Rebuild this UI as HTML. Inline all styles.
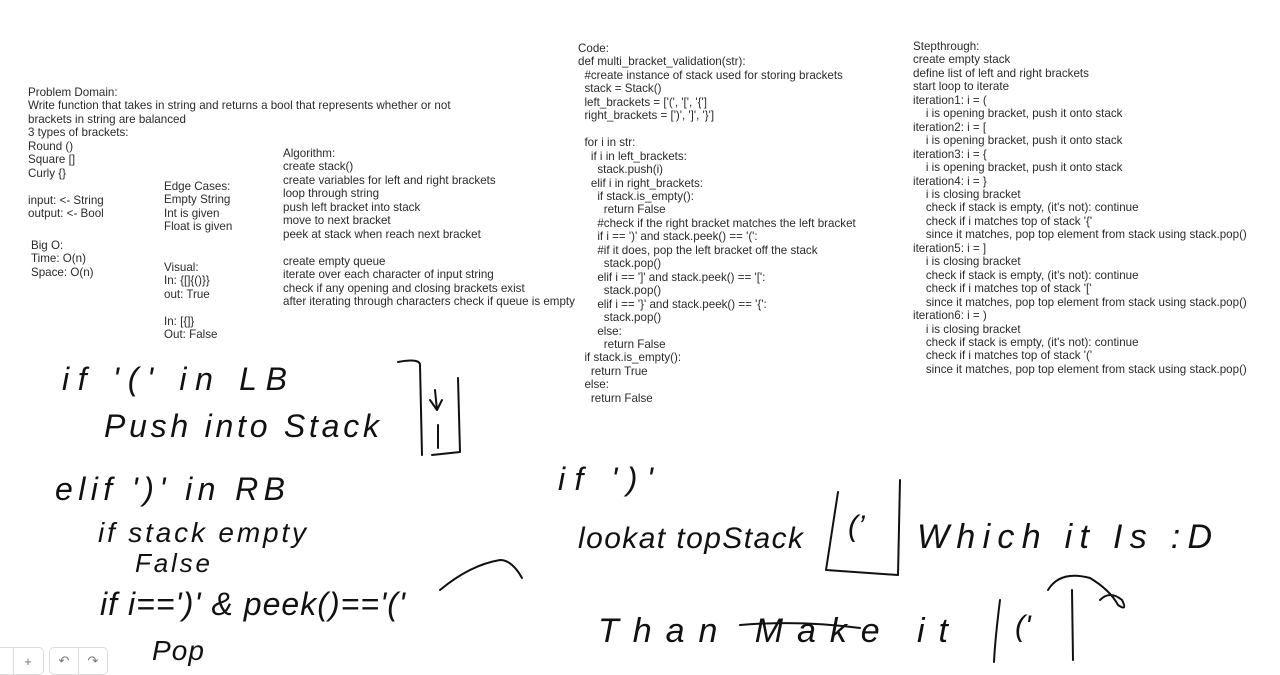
<!DOCTYPE html>
<html><head><style>
body{margin:0;width:1280px;height:673px;background:#fff;overflow:hidden;position:relative;font-family:"Liberation Sans",Arial,sans-serif;font-size:11.6px;color:#2a2a2a}
.b{position:absolute;line-height:13.46px;white-space:pre}
.tb{position:absolute;top:647px;height:26px;border:1px solid #ddd;border-radius:5px;background:#fff;display:flex;color:#777;font-size:13px}
.tb div{width:28px;display:flex;align-items:center;justify-content:center}
.tb div+div{border-left:1px solid #ddd}
</style></head><body>
<div class="b" style="left:28px;top:86px">Problem Domain:
Write function that takes in string and returns a bool that represents whether or not
brackets in string are balanced
3 types of brackets:
Round ()
Square []
Curly {}

input: &lt;- String
output: &lt;- Bool</div>
<div class="b" style="left:31px;top:239px">Big O:
Time: O(n)
Space: O(n)</div>
<div class="b" style="left:164px;top:180px">Edge Cases:
Empty String
Int is given
Float is given


Visual:
In: {[]{()}}
out: True

In: [{]}
Out: False</div>
<div class="b" style="left:283px;top:147px">Algorithm:
create stack()
create variables for left and right brackets
loop through string
push left bracket into stack
move to next bracket
peek at stack when reach next bracket

create empty queue
iterate over each character of input string
check if any opening and closing brackets exist
after iterating through characters check if queue is empty</div>
<div class="b" style="left:578px;top:42px">Code:
def multi_bracket_validation(str):
  #create instance of stack used for storing brackets
  stack = Stack()
  left_brackets = ['(', '[', '{']
  right_brackets = [')', ']', '}']

  for i in str:
    if i in left_brackets:
      stack.push(i)
    elif i in right_brackets:
      if stack.is_empty():
        return False
      #check if the right bracket matches the left bracket
      if i == ')' and stack.peek() == '(':
      #if it does, pop the left bracket off the stack
        stack.pop()
      elif i == ']' and stack.peek() == '[':
        stack.pop()
      elif i == '}' and stack.peek() == '{':
        stack.pop()
      else:
        return False
  if stack.is_empty():
    return True
  else:
    return False</div>
<div class="b" style="left:913px;top:40px">Stepthrough:
create empty stack
define list of left and right brackets
start loop to iterate
iteration1: i = (
    i is opening bracket, push it onto stack
iteration2: i = [
    i is opening bracket, push it onto stack
iteration3: i = {
    i is opening bracket, push it onto stack
iteration4: i = }
    i is closing bracket
    check if stack is empty, (it's not): continue
    check if i matches top of stack '{'
    since it matches, pop top element from stack using stack.pop()
iteration5: i = ]
    i is closing bracket
    check if stack is empty, (it's not): continue
    check if i matches top of stack '['
    since it matches, pop top element from stack using stack.pop()
iteration6: i = )
    i is closing bracket
    check if stack is empty, (it's not): continue
    check if i matches top of stack '('
    since it matches, pop top element from stack using stack.pop()</div>
<svg style="position:absolute;left:0;top:0" width="1280" height="673" fill="none" stroke="#111" stroke-width="2" stroke-linecap="round" stroke-linejoin="round">
<g font-family="Liberation Sans,sans-serif" font-style="italic" font-size="32" fill="#111" stroke="none" font-weight="300">
<text x="62" y="390" textLength="225">if '(' in LB</text>
<text x="104" y="437" textLength="275">Push into Stack</text>
<text x="55" y="500" textLength="230">elif ')' in RB</text>
<text x="98" y="542" textLength="208" font-size="28">if stack empty</text>
<text x="135" y="572" font-size="26" textLength="75">False</text>
<text x="100" y="615" textLength="305">if i==')' &amp; peek()=='('</text>
<text x="152" y="660" font-size="28" textLength="52">Pop</text>
<text x="558" y="490" textLength="95">if ')'</text>
<text x="578" y="548" font-size="30" textLength="225">lookat topStack</text>
<text x="917" y="548" font-size="34" textLength="295">Which it Is :D</text>
<text x="598" y="642" font-size="34" textLength="350">Than Make it</text>
<text x="848" y="536" font-size="30">(’</text>
<text x="1015" y="636" font-size="30">('</text>
</g>
<path d="M398 362 Q420 358 420 365 L422 455 M458 378 L460 452 L432 455 M435 390 L437 410 M430 400 L437 410 L442 400 M438 425 L438 448"/>
<path d="M838 492 L826 570 L898 575 L900 480"/>
<path d="M1000 600 Q995 640 994 662 M1072 590 L1073 660 M1048 590 Q1060 570 1090 578 Q1110 590 1118 605 Q1128 612 1122 600 Q1110 590 1100 600"/>
<path d="M440 590 Q470 565 500 560 Q512 560 522 578"/>
<path d="M740 625 Q800 620 860 628"/>
</svg>
<div class="tb" style="left:-8px;width:50px"><div style="width:20px"></div><div>+</div></div>
<div class="tb" style="left:49px"><div>↶</div><div>↷</div></div>
</body></html>
